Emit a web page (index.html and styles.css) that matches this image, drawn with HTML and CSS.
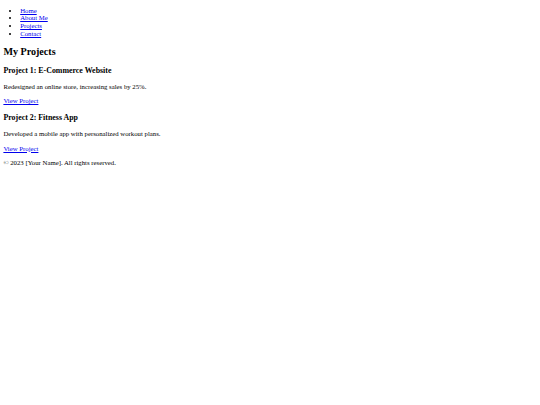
FILE: index.html
```html
<!DOCTYPE html>
<html lang="en">
<head>
<meta charset="utf-8">
<title>My Portfolio</title>
<link rel="stylesheet" href="styles.css">
</head>
<body>
<header>
  <nav>
    <ul class="menu">
      <li><a href="#">Home</a></li>
      <li><a href="#">About Me</a></li>
      <li><a href="#">Projects</a></li>
      <li><a href="#">Contact</a></li>
    </ul>
  </nav>
</header>
<main>
  <h2 class="title">My Projects</h2>
  <div class="project">
    <h3 class="project-title">Project 1: E-Commerce Website</h3>
    <p class="text">Redesigned an online store, increasing sales by 25%.</p>
    <p class="text"><a href="#">View Project</a></p>
  </div>
  <div class="project">
    <h3 class="project-title">Project 2: Fitness App</h3>
    <p class="text">Developed a mobile app with personalized workout plans.</p>
    <p class="text"><a href="#">View Project</a></p>
  </div>
</main>
<footer>
  <p class="text">&copy; 2023 [Your Name]. All rights reserved.</p>
</footer>
</body>
</html>
```
FILE: styles.css
```css
body {
  margin: 0 3.4px 3.4px;
  font-family: "Liberation Serif", "Times New Roman", serif;
  font-size: 6.75px;
  line-height: 1.15;
  color: #000;
  background: #fff;
}
a {
  color: #0000ee;
}
.menu {
  margin: 6.6px 0 6.75px;
  padding-left: 16.8px;
}
.title {
  font-size: 10.1px;
  margin: 8.4px 0;
}
.project-title {
  font-size: 7.9px;
  margin: 7.9px 0;
}
.text {
  margin: 6.75px 0;
}
```
